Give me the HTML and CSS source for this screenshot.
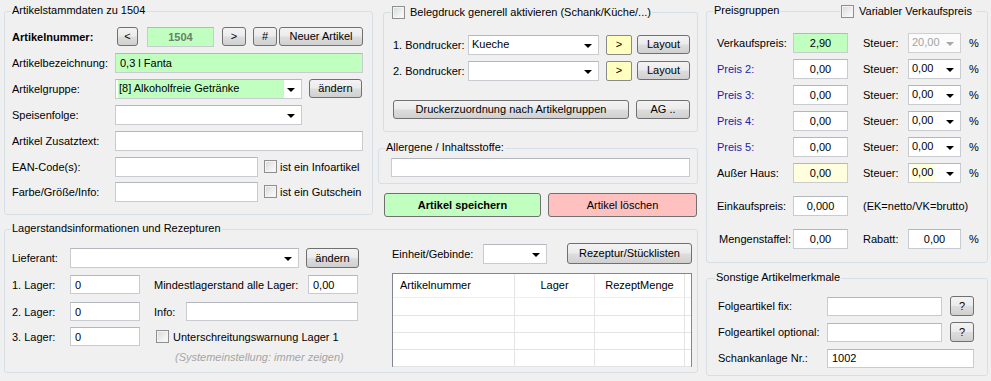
FILE: index.html
```html
<!DOCTYPE html>
<html lang="de">
<head>
    <meta charset="UTF-8">
    <title>Artikelstammdaten</title>
    <link rel="stylesheet" href="styles.css">
</head>
<body>
    <div class="left">
        <div class="top">
            <div class="group ga">
                <span class="gtitle">Artikelstammdaten zu 1504</span>
                <div class="row ra1">
                    <span class="lbl bold w105">Artikelnummer:</span>
                    <button class="btn w21">&lt;</button>
                    <input class="tb green nr" value="1504" readonly>
                    <button class="btn w24 ml8">&gt;</button>
                    <button class="btn w24 ml7">#</button>
                    <button class="btn w84 ml2">Neuer Artikel</button>
                </div>
                <div class="row ra2">
                    <span class="lbl w103">Artikelbezeichnung:</span>
                    <input class="tb green w248" value="0,3 l Fanta">
                </div>
                <div class="row ra3">
                    <span class="lbl w103">Artikelgruppe:</span>
                    <div class="combo w187"><span class="sel green">[8] Alkoholfreie Getränke</span><span class="arrow"></span></div>
                    <button class="btn w53 ml7">ändern</button>
                </div>
                <div class="row ra4">
                    <span class="lbl w103">Speisenfolge:</span>
                    <div class="combo w187"><span class="arrow"></span></div>
                </div>
                <div class="row ra5">
                    <span class="lbl w103">Artikel Zusatztext:</span>
                    <input class="tb w248" value="">
                </div>
                <div class="row ra6">
                    <span class="lbl w103">EAN-Code(s):</span>
                    <input class="tb w143" value="">
                    <span class="chk ml6"></span>
                    <span class="lbl ml3">ist ein Infoartikel</span>
                </div>
                <div class="row ra7">
                    <span class="lbl w103">Farbe/Größe/Info:</span>
                    <input class="tb w143" value="">
                    <span class="chk ml6"></span>
                    <span class="lbl ml3">ist ein Gutschein</span>
                </div>
            </div>

            <div class="col2">
                <div class="group gb">
                    <span class="gtitle chktitle"><span class="chk"></span>Belegdruck generell aktivieren (Schank/Küche/...)</span>
                    <div class="row rb1">
                        <span class="lbl w75">1. Bondrucker:</span>
                        <div class="combo w131"><span class="sel">Kueche</span><span class="arrow"></span></div>
                        <button class="btn yellow w26 ml7">&gt;</button>
                        <button class="btn w53 ml5">Layout</button>
                    </div>
                    <div class="row rb2">
                        <span class="lbl w75">2. Bondrucker:</span>
                        <div class="combo w131"><span class="arrow"></span></div>
                        <button class="btn yellow w26 ml7">&gt;</button>
                        <button class="btn w53 ml5">Layout</button>
                    </div>
                    <div class="row rb3">
                        <button class="btn w236">Druckerzuordnung nach Artikelgruppen</button>
                        <button class="btn w54 ml7">AG ..</button>
                    </div>
                </div>

                <div class="group gc">
                    <span class="gtitle">Allergene / Inhaltsstoffe:</span>
                    <input class="tb w299 allerg" value="">
                </div>

                <div class="actions">
                    <button class="btn save">Artikel speichern</button>
                    <button class="btn delete">Artikel löschen</button>
                </div>
            </div>
        </div>

        <div class="group gl">
            <span class="gtitle">Lagerstandsinformationen und Rezepturen</span>
            <div class="lager-left">
                <div class="row rl1">
                    <span class="lbl w58">Lieferant:</span>
                    <div class="combo w229"><span class="arrow"></span></div>
                    <button class="btn w53 ml7 h20">ändern</button>
                </div>
                <div class="row rl2">
                    <span class="lbl w58">1. Lager:</span>
                    <input class="tb w70 h19" value="0">
                    <span class="lbl ml14 w154">Mindestlagerstand alle Lager:</span>
                    <input class="tb w50 h19" value="0,00">
                </div>
                <div class="row rl3">
                    <span class="lbl w58">2. Lager:</span>
                    <input class="tb w70 h19" value="0">
                    <span class="lbl ml14 w32">Info:</span>
                    <input class="tb w172 h19" value="">
                </div>
                <div class="row rl4">
                    <span class="lbl w58">3. Lager:</span>
                    <input class="tb w70 h19" value="0">
                    <span class="chk ml16"></span>
                    <span class="lbl ml4">Unterschreitungswarnung Lager 1</span>
                </div>
                <div class="hint">(Systemeinstellung: immer zeigen)</div>
            </div>
            <div class="lager-right">
                <div class="row rr1">
                    <span class="lbl w91">Einheit/Gebinde:</span>
                    <div class="combo w64"><span class="arrow"></span></div>
                    <button class="btn w125 ml20 h21">Rezeptur/Stücklisten</button>
                </div>
                <div class="grid">
                    <div class="gh left-h">Artikelnummer</div>
                    <div class="gh">Lager</div>
                    <div class="gh">RezeptMenge</div>
                    <div class="gh last"></div>
                    <div class="gc1"></div><div class="gc1"></div><div class="gc1"></div><div class="gc1 last"></div>
                    <div class="gc1"></div><div class="gc1"></div><div class="gc1"></div><div class="gc1 last"></div>
                    <div class="gc1"></div><div class="gc1"></div><div class="gc1"></div><div class="gc1 last"></div>
                    <div class="gc1"></div><div class="gc1"></div><div class="gc1"></div><div class="gc1 last"></div>
                </div>
            </div>
        </div>
    </div>

    <div class="right">
        <div class="group gp">
            <span class="gtitle">Preisgruppen</span>
            <span class="gtitle chktitle var"><span class="chk"></span>Variabler Verkaufspreis</span>
            <div class="row rp1">
                <span class="lbl w76">Verkaufspreis:</span>
                <input class="tb green w55 num" value="2,90">
                <span class="lbl ml15 w45">Steuer:</span>
                <div class="combo w53 disabled"><span class="sel">20,00</span><span class="arrow"></span></div>
                <span class="lbl ml8">%</span>
            </div>
            <div class="row rp">
                <span class="lbl w76 blue">Preis 2:</span>
                <input class="tb w55 num" value="0,00">
                <span class="lbl ml15 w45">Steuer:</span>
                <div class="combo w53"><span class="sel">0,00</span><span class="arrow"></span></div>
                <span class="lbl ml8">%</span>
            </div>
            <div class="row rp">
                <span class="lbl w76 blue">Preis 3:</span>
                <input class="tb w55 num" value="0,00">
                <span class="lbl ml15 w45">Steuer:</span>
                <div class="combo w53"><span class="sel">0,00</span><span class="arrow"></span></div>
                <span class="lbl ml8">%</span>
            </div>
            <div class="row rp">
                <span class="lbl w76 blue">Preis 4:</span>
                <input class="tb w55 num" value="0,00">
                <span class="lbl ml15 w45">Steuer:</span>
                <div class="combo w53"><span class="sel">0,00</span><span class="arrow"></span></div>
                <span class="lbl ml8">%</span>
            </div>
            <div class="row rp">
                <span class="lbl w76 blue">Preis 5:</span>
                <input class="tb w55 num" value="0,00">
                <span class="lbl ml15 w45">Steuer:</span>
                <div class="combo w53"><span class="sel">0,00</span><span class="arrow"></span></div>
                <span class="lbl ml8">%</span>
            </div>
            <div class="row rp">
                <span class="lbl w76">Außer Haus:</span>
                <input class="tb w55 num lemon" value="0,00">
                <span class="lbl ml15 w45">Steuer:</span>
                <div class="combo w53"><span class="sel lemon">0,00</span><span class="arrow"></span></div>
                <span class="lbl ml8">%</span>
            </div>
            <div class="row rp7">
                <span class="lbl w76">Einkaufspreis:</span>
                <input class="tb w55 num" value="0,000">
                <span class="lbl ml15">(EK=netto/VK=brutto)</span>
            </div>
            <div class="row rp7">
                <span class="lbl w76 pl2">Mengenstaffel:</span>
                <input class="tb w55 num" value="0,00">
                <span class="lbl ml15 w45">Rabatt:</span>
                <input class="tb w53 num" value="0,00">
                <span class="lbl ml8">%</span>
            </div>
        </div>

        <div class="group gs">
            <span class="gtitle">Sonstige Artikelmerkmale</span>
            <div class="row rs1">
                <span class="lbl w109">Folgeartikel fix:</span>
                <input class="tb w115 h19" value="">
                <button class="btn w24 ml8 h20">?</button>
            </div>
            <div class="row rs">
                <span class="lbl w109">Folgeartikel optional:</span>
                <input class="tb w115 h19" value="">
                <button class="btn w24 ml8 h20">?</button>
            </div>
            <div class="row rs">
                <span class="lbl w109">Schankanlage Nr.:</span>
                <input class="tb w147 h19" value="1002">
            </div>
        </div>
    </div>
</body>
</html>
```

FILE: styles.css
```css
* {
    box-sizing: border-box;
}

body {
    margin: 0;
    width: 991px;
    height: 381px;
    overflow: hidden;
    display: flex;
    background-color: #f0f0f0;
    font-family: 'Liberation Sans', Arial, sans-serif;
    font-size: 11px;
    color: #000;
}

/* columns */
.left {
    margin-left: 4px;
    width: 694px;
    display: flex;
    flex-direction: column;
}

.top {
    display: flex;
    height: 217px;
}

.col2 {
    margin-left: 5px;
    width: 320px;
    display: flex;
    flex-direction: column;
}

.right {
    margin-left: 8px;
    width: 282px;
    display: flex;
    flex-direction: column;
}

/* group boxes */
.group {
    position: relative;
    border: 1px solid #d5dfe5;
    border-radius: 3px;
}

.gtitle {
    position: absolute;
    top: -8px;
    left: 6px;
    padding: 0 1px;
    line-height: 13px;
    background-color: #f0f0f0;
    white-space: nowrap;
}

.chktitle {
    display: flex;
    align-items: center;
}

.chktitle .chk {
    margin-right: 5px;
}

.ga {
    margin-top: 11px;
    width: 369px;
    height: 204px;
    padding-left: 7px;
}

.gb {
    margin-top: 12px;
    margin-left: 5px;
    width: 315px;
    height: 120px;
    padding-left: 9px;
}

.gb .gtitle {
    left: 7px;
    top: -7px;
}

.gc {
    margin-top: 16px;
    width: 320px;
    height: 36px;
    padding-left: 12px;
}

.gl {
    margin-top: 12px;
    height: 144px;
    display: flex;
}

.gp {
    margin-top: 11px;
    height: 252px;
    padding-left: 10px;
}

.gp .gtitle.var {
    left: 133px;
    top: -7px;
    padding-right: 4px;
}

.gs {
    margin-top: 15px;
    height: 98px;
    padding-left: 11px;
}

.gs .gtitle {
    left: 8px;
}

/* rows */
.row {
    display: flex;
    align-items: center;
    height: 20px;
}

.ra1 { margin-top: 15px; height: 19px; }
.ra2 { margin-top: 7px; }
.ra3 { margin-top: 5px; height: 21px; }
.ra4 { margin-top: 5px; height: 21px; }
.ra5 { margin-top: 6px; }
.ra6 { margin-top: 6px; height: 19px; }
.ra7 { margin-top: 6px; height: 19px; }

.rb1 { margin-top: 21px; height: 21px; }
.rb2 { margin-top: 5px; height: 21px; }
.rb3 { margin-top: 19px; height: 19px; }

.rp1 { margin-top: 21px; }
.rp { margin-top: 6px; }
.rp7 { margin-top: 13px; }

.rs1 { margin-top: 17px; }
.rs { margin-top: 6px; }

.lager-left {
    width: 385px;
    padding-left: 7px;
}

.lager-right {
    padding-left: 2px;
}

.rl1 { margin-top: 18px; }
.rl2 { margin-top: 7px; height: 19px; }
.rl3 { margin-top: 8px; height: 19px; }
.rl4 { margin-top: 6px; height: 19px; }

.rr1 { margin-top: 13px; height: 21px; }

.hint {
    margin-top: 5px;
    padding-left: 163px;
    font-style: italic;
    color: #a5a5a5;
    line-height: 13px;
}

/* labels */
.lbl {
    white-space: nowrap;
    flex-shrink: 0;
}

.bold { font-weight: bold; }
.blue { color: #2222a8; }
.pl2 { padding-left: 2px; }

/* text boxes */
.tb {
    height: 20px;
    padding: 0 4px;
    flex-shrink: 0;
    border: 1px solid #c8cbd0;
    border-top-color: #b4b7bd;
    background-color: #fff;
    font-family: 'Liberation Sans', Arial, sans-serif;
    font-size: 11px;
    color: #000;
    outline: none;
}

.tb.num { text-align: center; }

.nr {
    margin-left: 9px;
    width: 67px;
    text-align: center;
    font-weight: bold;
    color: #6a806a;
}

.allerg {
    margin-top: 9px;
    height: 19px;
}

.green { background-color: #c0ffc0; }
.lemon { background-color: #ffffe0; }

/* combo boxes */
.combo {
    position: relative;
    height: 20px;
    border: 1px solid #c8cbd0;
    border-top-color: #b4b7bd;
    background-color: #fff;
    display: flex;
    align-items: center;
    flex-shrink: 0;
}

.combo .sel {
    margin-left: 2px;
    padding: 2px 2px 3px 1px;
    line-height: 13px;
    white-space: nowrap;
}

.combo .sel.green {
    flex: 1;
    margin-right: 17px;
}

.arrow {
    position: absolute;
    right: 6px;
    top: 8px;
    width: 0;
    height: 0;
    border-left: 4px solid transparent;
    border-right: 4px solid transparent;
    border-top: 4px solid #000;
}

.combo.disabled {
    background-color: #fbfbfb;
    border-color: #d0d0d0;
    color: #a3a3a3;
}

.combo.disabled .arrow {
    border-top-color: #a8a8a8;
}

/* buttons */
.btn {
    height: 19px;
    padding: 0;
    flex-shrink: 0;
    border: 1px solid #707070;
    border-radius: 3px;
    background: linear-gradient(#f3f3f3 0%, #ebebeb 48%, #dddddd 52%, #d0d0d0 100%);
    font-family: 'Liberation Sans', Arial, sans-serif;
    font-size: 11px;
    color: #000;
    line-height: 15px;
    white-space: nowrap;
}

.btn.yellow {
    height: 20px;
    background: #ffffc0;
    border-color: #8a8a8a;
    border-radius: 2px;
}

.actions {
    margin-top: 9px;
    margin-left: 6px;
    display: flex;
}

.save {
    width: 157px;
    height: 24px;
    background: #c0ffc0;
    font-weight: bold;
}

.delete {
    margin-left: 7px;
    width: 149px;
    height: 24px;
    background: #ffc0c0;
}

/* check boxes */
.chk {
    display: inline-block;
    width: 13px;
    height: 13px;
    flex-shrink: 0;
    border: 1px solid #8e8f8f;
    background: linear-gradient(135deg, #d7d7d7 0%, #f0f0f0 60%, #fbfbfb 100%);
    box-shadow: inset 0 0 0 1px #f4f4f4;
}

/* recipe grid */
.grid {
    margin-top: 9px;
    width: 300px;
    height: 94px;
    border: 1px solid #82878f;
    background-color: #fff;
    display: grid;
    grid-template-columns: 122px 80px 90px 1fr;
    grid-template-rows: 24px 18px 17px 17px 17px;
}

.gh {
    display: flex;
    align-items: center;
    justify-content: center;
    border-right: 1px solid #e4e4e4;
    border-bottom: 1px solid #eeeeee;
    padding-bottom: 1px;
}

.gh.left-h {
    justify-content: flex-start;
    padding-left: 7px;
}

.gc1 {
    border-right: 1px solid #e4e4e4;
    border-bottom: 1px solid #e4e4e4;
}

.gc1.last,
.gh.last {
    border-right: none;
}

/* sizes and spacing helpers, kept last so they win */
.w21 { width: 21px; }
.w24 { width: 24px; }
.w26 { width: 26px; }
.w32 { width: 32px; }
.w45 { width: 45px; }
.w50 { width: 50px; }
.w53 { width: 53px; }
.w54 { width: 54px; }
.w55 { width: 55px; }
.w58 { width: 58px; }
.w64 { width: 64px; }
.w70 { width: 70px; }
.w75 { width: 75px; }
.w76 { width: 76px; }
.w84 { width: 84px; }
.w91 { width: 91px; }
.w103 { width: 103px; }
.w105 { width: 105px; }
.w109 { width: 109px; }
.w115 { width: 115px; }
.w125 { width: 125px; }
.w131 { width: 131px; }
.w143 { width: 143px; }
.w147 { width: 147px; }
.w154 { width: 154px; }
.w172 { width: 172px; }
.w187 { width: 187px; }
.w229 { width: 229px; }
.w236 { width: 236px; }
.w248 { width: 248px; }
.w299 { width: 299px; }

.ml2 { margin-left: 2px; }
.ml3 { margin-left: 3px; }
.ml4 { margin-left: 4px; }
.ml5 { margin-left: 5px; }
.ml6 { margin-left: 6px; }
.ml7 { margin-left: 7px; }
.ml8 { margin-left: 8px; }
.ml14 { margin-left: 14px; }
.ml15 { margin-left: 15px; }
.ml16 { margin-left: 16px; }
.ml20 { margin-left: 20px; }

.h19 { height: 19px; }
.h20 { height: 20px; }
.h21 { height: 21px; }
```
